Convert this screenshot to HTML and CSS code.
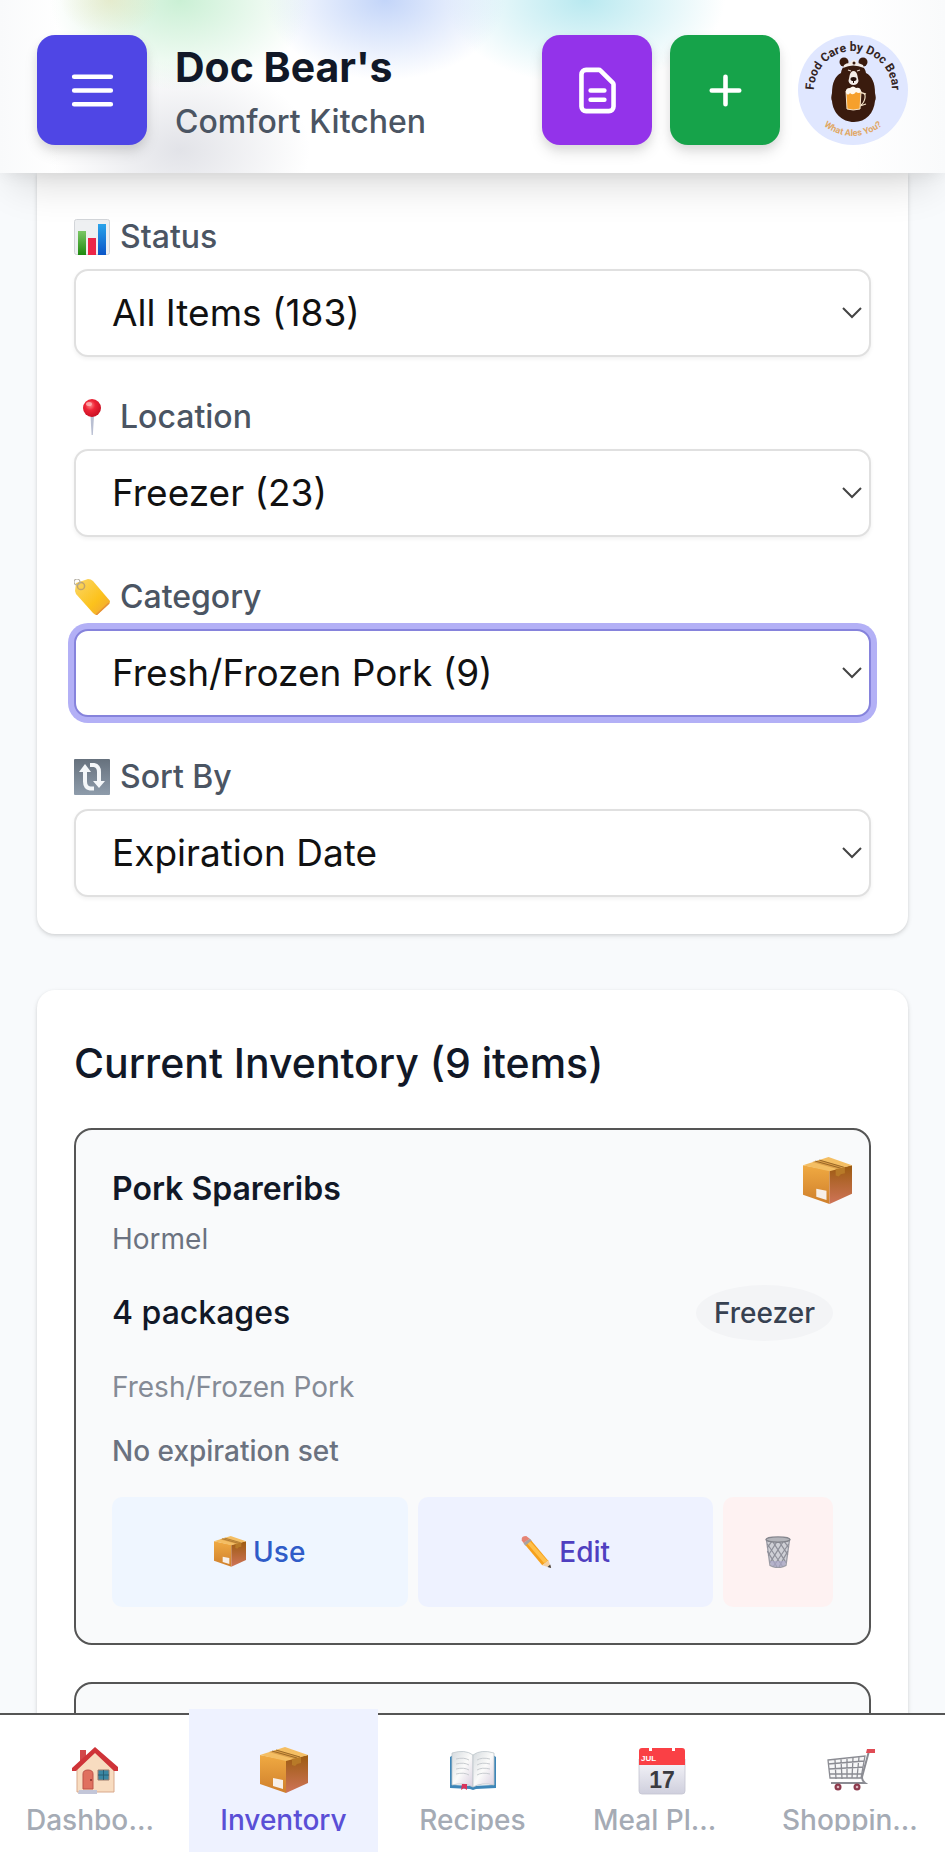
FILE: index.html
```html
<!DOCTYPE html>
<html lang="en">
<head>
<meta charset="utf-8">
<meta name="viewport" content="width=device-width, initial-scale=1">
<title>Doc Bear's Comfort Kitchen</title>
<link rel="stylesheet" href="styles.css">
</head>
<body>
<svg class="sprite" aria-hidden="true">
  <defs>
    <linearGradient id="boxFront" x1="0" y1="0" x2="0" y2="1"><stop offset="0" stop-color="#f0aa42"/><stop offset="1" stop-color="#cf7f2c"/></linearGradient>
    <linearGradient id="boxSide" x1="0" y1="0" x2="0" y2="1"><stop offset="0" stop-color="#9c5b10"/><stop offset="1" stop-color="#cf7458"/></linearGradient>
    <linearGradient id="tagFill" x1="0" y1="0" x2="1" y2="1"><stop offset="0" stop-color="#fbd768"/><stop offset=".6" stop-color="#fcc21c"/><stop offset="1" stop-color="#eda23c"/></linearGradient>
    <linearGradient id="greyFill" x1="0" y1="0" x2="0" y2="1"><stop offset="0" stop-color="#66717d"/><stop offset="1" stop-color="#8e9cab"/></linearGradient>
    <linearGradient id="barGreen" x1="0" y1="0" x2="0" y2="1"><stop offset="0" stop-color="#7cc766"/><stop offset="1" stop-color="#1f8a10"/></linearGradient>
    <linearGradient id="barBlue" x1="0" y1="0" x2="0" y2="1"><stop offset="0" stop-color="#2aa4ea"/><stop offset="1" stop-color="#0a55c8"/></linearGradient>
    <linearGradient id="pageFill" x1="0" y1="0" x2="1" y2="1"><stop offset="0" stop-color="#d5dade"/><stop offset=".5" stop-color="#fbfbfa"/><stop offset="1" stop-color="#d9cfe0"/></linearGradient>
    <linearGradient id="calFill" x1="0" y1="0" x2="0" y2="1"><stop offset="0" stop-color="#f6f6fa"/><stop offset="1" stop-color="#cfcfdd"/></linearGradient>
    <radialGradient id="pinFill" cx=".4" cy=".35" r=".7"><stop offset="0" stop-color="#ff8a8a"/><stop offset=".4" stop-color="#ee2436"/><stop offset="1" stop-color="#c40d22"/></radialGradient>
    <symbol id="package" viewBox="0 0 48 48">
      <path d="M0 8 26 13v33L0 37z" fill="url(#boxFront)"/>
      <path d="M26 13 48 8v28L26 46z" fill="url(#boxSide)"/>
      <path d="M0 8 25 0l23 8-22 6z" fill="#f4be63"/>
      <path d="m9 5 25 7 7-2L17 3z" fill="#dca04a"/>
      <path d="m12 4 25 7M16 3l24 7" stroke="#8a5a1d" stroke-width=".8" fill="none"/>
      <path d="m32 12 9-2v6l-4 1-2 2-3-1z" fill="#b87a28"/>
      <path d="m13 31 10 2v9l-10-3z" fill="#f7efe8"/>
    </symbol>
    <symbol id="chart" viewBox="0 0 36 36">
      <rect x=".5" y=".5" width="35" height="35" rx="2" fill="#eef0f2" stroke="#d2d5d9"/>
      <path d="M4 12h8v24H4z" fill="url(#barGreen)"/>
      <path d="M14 19h8v17h-8z" fill="#ec2648"/>
      <path d="M24 5h8v31h-8z" fill="url(#barBlue)"/>
    </symbol>
    <symbol id="pin" viewBox="0 0 36 36">
      <path d="M16.500 17h3.500l-1.200 19h-1.200z" fill="#b9bfd2"/>
      <circle cx="18" cy="9" r="9" fill="url(#pinFill)"/>
      <ellipse cx="15" cy="5" rx="3" ry="2" fill="#ffc1c1" opacity=".7"/>
    </symbol>
    <symbol id="tag" viewBox="0 0 36 36">
      <path d="M1 12 2 4 14 0q3 0 5 2l17 20q0 2-1 3L23 36q-2 0-4-2L2 15z" fill="url(#tagFill)"/>
      <path d="M35 24 22 36" stroke="#e69138" stroke-width="1.500"/>
      <circle cx="7" cy="7" r="3.600" fill="none" stroke="#c1a36a" stroke-width="1.500"/>
      <circle cx="3" cy="3" r="3" fill="none" stroke="#b5b0a4" stroke-width="1.200"/>
    </symbol>
    <symbol id="sort" viewBox="0 0 36 36">
      <rect width="36" height="36" rx="1" fill="url(#greyFill)"/>
      <g fill="none" stroke="#f4f7f9" stroke-width="4">
        <path d="M20 29.500h-4q-5-1-5-7V11"/>
        <path d="M16 6h4q5 1 5 7v10"/>
      </g>
      <path d="m5 13 6-8 6 8zM19 22h12l-6 7z" fill="#f4f7f9"/>
    </symbol>
    <symbol id="pencil" viewBox="0 0 36 36">
      <path d="m4 8 7-5 21 25-7 5z" fill="#f6a01c"/>
      <path d="m6.500 6.500 3-2.500L31 28l-4 2.500z" fill="#ffc04a"/>
      <path d="M2 5Q1 0 7 0l4 3-7 5z" fill="#e58475"/>
      <path d="m4 8 7-5 2 2-7 6z" fill="#a9a1a0"/>
      <path d="m32 27 3 9-10-3z" fill="#f3cfa0"/>
      <path d="m34 32 1 4-4-1z" fill="#45403f"/>
    </symbol>
    <symbol id="trash" viewBox="0 0 36 36">
      <path d="M5 4h26l-4 29q-9 5-18 0z" fill="#cfd0d6" stroke="#9c9da6" stroke-width="1.500"/>
      <path d="m6 9 17 25M6 17l11 18M12 6l15 24M19 6l10 15M25 6l5 7M30 9 13 34M29 17 19 35M24 6 9 30M17 6 7 22M11 6l-5 7" stroke="#8e8f99" stroke-width="1.300" fill="none"/>
      <path d="M9 28h18l-1 5q-8 4-16 0z" fill="#aaa6c6" opacity=".7"/>
      <ellipse cx="18" cy="4" rx="13.500" ry="3" fill="#b4b5bb" stroke="#85868e" stroke-width="1.500"/>
    </symbol>
    <symbol id="house" viewBox="0 0 48 48">
      <path d="M9 3h6v12H9z" fill="#d2484a"/>
      <path d="M6 21 24 3l19 18v24H6z" fill="#f8dcc0" stroke="#d9a98c" stroke-width="1"/>
      <path d="M1 21 24 0l23 20v4h-4L24 6 5 24H1z" fill="#cf3338"/>
      <path d="M12 42V27q0-4 5-4t5 4v15z" fill="#e0705f" stroke="#bd5349"/>
      <circle cx="20" cy="33" r="1" fill="#8b2f2a"/>
      <path d="M27 23h11v10H27z" fill="#3a87a3" stroke="#9c7a6a"/>
      <path d="M32.500 23v10M27 28h11" stroke="#275e75"/>
      <path d="M8 43h18v4H7z" fill="#c3c6d8"/>
    </symbol>
    <symbol id="book" viewBox="0 0 48 48">
      <path d="M1 10 4 8v30l20 1 20-1V8l3 2v31l-20 1-3 1-3-1-20-1z" fill="#3e86b8"/>
      <path d="M3 6q13-4 21 2v32q-9-5-21-2z" fill="url(#pageFill)" stroke="#bcc5ca" stroke-width=".8"/>
      <path d="M45 6q-13-4-21 2v32q9-5 21-2z" fill="url(#pageFill)" stroke="#bcc5ca" stroke-width=".8"/>
      <path d="M7 12q8-2 13 1M7 17q8-2 13 1M7 22q8-2 13 1M7 27q8-2 13 1M28 13q5-3 13-1M28 18q5-3 13-1M28 23q5-3 13-1M28 28q5-3 13-1" fill="none" stroke="#c8ccd0"/>
      <path d="M13 37h5v6l-3-2-3 2z" fill="#d9335c"/>
    </symbol>
    <symbol id="calendar" viewBox="0 0 48 48">
      <path d="M1 12h46v32q0 3-3 3H4q-3 0-3-3z" fill="url(#calFill)" stroke="#c4c4d0" stroke-width=".8"/>
      <path d="M1 18V4q0-3 3-3h7v3h3V1h20v3h3V1h7q3 0 3 3v14z" fill="#fa4045"/>
      <text x="3" y="14" class="cal-month">JUL</text>
      <text x="24" y="41" class="cal-day">17</text>
    </symbol>
    <symbol id="cart" viewBox="0 0 48 48">
      <path d="M1 13 38 9l-4 21q-1 3-4 3L3 31z" fill="#f6f6f7"/>
      <g fill="none" stroke="#8b8c93" stroke-width="1.300">
        <path d="m1 13 37-4-4 22H3zM8 13l1 19M14 12l1 20M20 11v20M26 11l-1 20M32 10l-2 21M1 17l36-3M2 22l34-2M3 27h32"/>
        <path d="M42 4 35 30q0 4 3 6H4" stroke-width="2"/>
      </g>
      <path d="M40 2h8v4h-9z" fill="#e04b55"/>
      <circle cx="11" cy="40" r="3.500" fill="#8c3a4c"/><circle cx="30" cy="40" r="3.500" fill="#8c3a4c"/>
      <circle cx="11" cy="40" r="1.300" fill="#dab5bd"/><circle cx="30" cy="40" r="1.300" fill="#dab5bd"/>
    </symbol>
    <symbol id="chevron" viewBox="0 0 20 12"><path d="m1 1 9 9 9-9" fill="none" stroke="#444" stroke-width="2"/></symbol>
  </defs>
</svg>

<div class="app">
  <header class="header">
    <button class="icon-button menu" type="button" aria-label="Open menu">
      <svg viewBox="0 0 24 24"><path d="M4 6h16M4 12h16M4 18h16"/></svg>
    </button>
    <div class="brand">
      <h1 class="brand-name">Doc Bear's</h1>
      <p class="brand-sub">Comfort Kitchen</p>
    </div>
    <div class="header-actions">
      <button class="icon-button notes" type="button" aria-label="Notes">
        <svg viewBox="0 0 24 24"><path d="M9 12h6m-6 4h6m2 5H7a2 2 0 01-2-2V5a2 2 0 012-2h5.586a1 1 0 01.707.293l5.414 5.414a1 1 0 01.293.707V19a2 2 0 01-2 2z"/></svg>
      </button>
      <button class="icon-button add" type="button" aria-label="Add item">
        <svg viewBox="0 0 24 24"><path d="M12 6v6m0 0v6m0-6h6m-6 0H6"/></svg>
      </button>
      <svg class="logo" viewBox="0 0 110 110" role="img" aria-label="Food Care by Doc Bear">
        <defs>
          <path id="arcTop" d="M16 62V55a39 39 0 0 1 78 0V62"/>
          <path id="arcBottom" d="M9 55a46 46 0 0 0 92 0"/>
        </defs>
        <circle cx="55" cy="55" r="55" fill="#e0e7ff"/>
        <text class="logo-top"><textPath href="#arcTop" startOffset="50%">Food Care by Doc Bear</textPath></text>
        <text class="logo-bottom"><textPath href="#arcBottom" startOffset="50%">What Ales You?</textPath></text>
        <g fill="#3a1b0e">
          <circle cx="46" cy="27" r="4.500"/><circle cx="65" cy="27" r="4.500"/>
          <path d="M55 28c-8 0-11 4-12 10-6 3-9 10-9 20-1 4-1 6 0 8 1 12 10 21 22 21s20-9 21-21c1-2 1-4 0-8 0-10-3-17-9-20-1-6-5-10-13-10z"/>
        </g>
        <path d="M45 33q10-5 21 0l-1-3q-4-2-6-2 0-3-3-3t-4 3q-4 0-6 2z" fill="#f4ede8"/>
        <circle cx="56" cy="28" r="1.500" fill="#3a1b0e"/>
        <path d="M50 35l3 1M62 35l-3 1" stroke="#e7d6cb" stroke-width="1.200"/>
        <path d="M55.500 36q3 0 4 5l1 5q-1 4-5 4t-5-4l1-5q1-5 4-5z" fill="#f4ede8"/>
        <ellipse cx="55.500" cy="44" rx="3" ry="2" fill="#24100a"/>
        <path d="M55.500 45v3" stroke="#24100a"/>
        <path d="M48 56h15l-1 18q-7 2-13 0z" fill="#f6a02c" stroke="#f5e3c8"/>
        <path d="M48 58q-1-5 4-5 3-3 6 0 5-1 5 4-2 2-5 0-3 4-6 1-2 3-4 0z" fill="#fff8ee"/>
        <path d="M63 58q5 0 4 5t-4 7M62 57l6 2M62 71l6-2" fill="none" stroke="#f5e3c8" stroke-width="1.200"/>
      </svg>
    </div>
  </header>

  <main class="content">
    <form class="card filters">
      <div class="field">
        <label class="field-label" for="status"><svg class="emoji-label"><use href="#chart"/></svg>Status</label>
        <div class="select-wrap">
          <select class="select" id="status"><option>All Items (183)</option></select>
          <svg class="chevron"><use href="#chevron"/></svg>
        </div>
      </div>
      <div class="field">
        <label class="field-label" for="location"><svg class="emoji-label"><use href="#pin"/></svg>Location</label>
        <div class="select-wrap">
          <select class="select" id="location"><option>Freezer (23)</option></select>
          <svg class="chevron"><use href="#chevron"/></svg>
        </div>
      </div>
      <div class="field">
        <label class="field-label" for="category"><svg class="emoji-label"><use href="#tag"/></svg>Category</label>
        <div class="select-wrap">
          <select class="select is-focused" id="category"><option>Fresh/Frozen Pork (9)</option></select>
          <svg class="chevron"><use href="#chevron"/></svg>
        </div>
      </div>
      <div class="field">
        <label class="field-label" for="sort-by"><svg class="emoji-label"><use href="#sort"/></svg>Sort By</label>
        <div class="select-wrap">
          <select class="select" id="sort-by"><option>Expiration Date</option></select>
          <svg class="chevron"><use href="#chevron"/></svg>
        </div>
      </div>
    </form>

    <section class="card inventory">
      <h2 class="inventory-title">Current Inventory (9 items)</h2>
      <article class="item">
        <svg class="item-emoji" aria-hidden="true"><use href="#package"/></svg>
        <div class="item-head">
          <h3 class="item-name">Pork Spareribs</h3>
          <p class="item-brand">Hormel</p>
        </div>
        <div class="item-row">
          <span class="item-qty">4 packages</span>
          <span class="badge">Freezer</span>
        </div>
        <p class="item-category">Fresh/Frozen Pork</p>
        <p class="item-expiry">No expiration set</p>
        <div class="item-actions">
          <button class="action use" type="button"><svg class="emoji-action"><use href="#package"/></svg>Use</button>
          <button class="action edit" type="button"><svg class="emoji-action"><use href="#pencil"/></svg>Edit</button>
          <button class="action delete" type="button" aria-label="Delete"><svg class="emoji-action"><use href="#trash"/></svg></button>
        </div>
      </article>
      <article class="item"></article>
    </section>
  </main>

  <nav class="tabs">
    <a class="tab" href="#dashboard"><svg class="tab-icon"><use href="#house"/></svg><span class="tab-text">Dashboard</span></a>
    <a class="tab is-active" href="#inventory"><svg class="tab-icon"><use href="#package"/></svg><span class="tab-text">Inventory</span></a>
    <a class="tab" href="#recipes"><svg class="tab-icon"><use href="#book"/></svg><span class="tab-text">Recipes</span></a>
    <a class="tab" href="#meals"><svg class="tab-icon"><use href="#calendar"/></svg><span class="tab-text">Meal Planning</span></a>
    <a class="tab" href="#shopping"><svg class="tab-icon"><use href="#cart"/></svg><span class="tab-text">Shopping List</span></a>
  </nav>
</div>
</body>
</html>
```

FILE: styles.css
```css
* { box-sizing: border-box; }

body {
  margin: 0;
  font-family: Inter, "Liberation Sans", sans-serif;
  font-optical-sizing: none;
  background: #f8fafc;
  color: #111827;
}

h1, h2, h3, p { margin: 0; }
button, select { font: inherit; }
.sprite { position: absolute; width: 0; height: 0; }

.app { display: flex; flex-direction: column; height: 100vh; }

/* Header */
.header {
  position: relative;
  z-index: 2;
  display: flex;
  gap: 28px;
  padding: 35px 37px 28px;
  background:
    radial-gradient(ellipse 50px 36px at 110px 0, #e3dfb080, transparent),
    radial-gradient(ellipse 130px 90px at 180px 0, #bdeccacc, transparent),
    radial-gradient(ellipse 120px 80px at 385px 0, #c3d5f9, transparent),
    radial-gradient(ellipse 140px 85px at 585px 0, #b9e9f0, transparent),
    radial-gradient(ellipse 130px 90px at 180px 150px, #e2e3e8, transparent),
    linear-gradient(90deg, #f9fafb, #fff 60px, #fff calc(100% - 90px), #f9fafb);
  box-shadow: 0 23px 40px -14px rgba(0, 0, 0, .16), 0 4px 16px -4px rgba(0, 0, 0, .08);
}

.icon-button {
  display: grid;
  place-items: center;
  width: 110px;
  height: 110px;
  padding: 0;
  border: 0;
  border-radius: 18px;
  box-shadow: 0 8px 14px rgba(0, 0, 0, .1), 0 4px 8px rgba(0, 0, 0, .06);
}
.icon-button svg {
  width: 55px;
  height: 55px;
  fill: none;
  stroke: #fff;
  stroke-width: 2;
  stroke-linecap: round;
  stroke-linejoin: round;
}
.menu { background: #4f46e5; }
.notes { background: #9333ea; }
.add { background: #16a34a; }

.brand { flex: 1; padding-top: 7px; }
.brand-name { margin-bottom: 7px; font-size: 41px; line-height: 50px; font-weight: 700; }
.brand-sub { font-size: 32px; line-height: 46px; font-weight: 500; color: #4b5563; }
.header-actions { display: flex; gap: 18px; }

.logo { width: 110px; height: 110px; }
.logo-top { font: 700 12px Roboto, sans-serif; fill: #33241f; text-anchor: middle; }
.logo-bottom { font: 700 9px Roboto, sans-serif; fill: #e0a765; text-anchor: middle; }

/* Content */
.content {
  flex: 1;
  min-height: 0;
  overflow-y: auto;
  scrollbar-width: none;
  padding: 0 37px;
}
.card {
  padding: 41px 37px 37px;
  border-radius: 18px;
  background: #fff;
  box-shadow: 0 2px 5px rgba(0, 0, 0, .12), 0 1px 3px rgba(0, 0, 0, .06);
}

.filters { display: grid; gap: 37px; border-radius: 0 0 18px 18px; }
.field { display: grid; gap: 9px; }
.field-label {
  display: flex;
  align-items: center;
  gap: 10px;
  font-size: 32px;
  line-height: 46px;
  font-weight: 500;
  color: #4b5563;
}
.emoji-label { width: 36px; height: 36px; }
.select-wrap { position: relative; }
.select {
  display: block;
  width: 100%;
  height: 88px;
  padding: 0 60px 2px 36px;
  border: 2px solid #e0e0e0;
  border-radius: 14px;
  appearance: none;
  background: #fff;
  color: #111;
  font-size: 37px;
  box-shadow: 0 2px 4px rgba(0, 0, 0, .06);
}
.select.is-focused { border-color: #8683dc; box-shadow: 0 0 0 6px #b3b0f6; }
.chevron {
  position: absolute;
  top: 38px;
  right: 9px;
  width: 20px;
  height: 12px;
  pointer-events: none;
}

.inventory { display: grid; gap: 37px; margin-top: 56px; }
.inventory-title { margin-bottom: -4px; font-size: 41px; line-height: 64px; font-weight: 500; }

.item {
  position: relative;
  display: grid;
  gap: 28px;
  min-height: 120px;
  padding: 36px;
  border: 2px solid #555;
  border-radius: 18px;
  background: #f9fafb;
}
.item-emoji { position: absolute; top: 27px; right: 17px; width: 49px; height: 49px; }
.item-head { display: grid; gap: 9px; }
.item-name { font-size: 32px; line-height: 46px; font-weight: 600; }
.item-brand { font-size: 28px; line-height: 36px; color: #6b7280; }
.item-row { display: flex; align-items: center; justify-content: space-between; }
.item-qty { font-size: 32px; line-height: 46px; font-weight: 500; }
.badge {
  padding: 10px 18px;
  border-radius: 50%;
  background: #f3f4f6;
  color: #374151;
  font-size: 28px;
  line-height: 36px;
  font-weight: 500;
}
.item-category { font-size: 28px; line-height: 36px; color: #858b96; }
.item-expiry { font-size: 28px; line-height: 36px; font-weight: 500; color: #6b7280; }

.item-actions { display: flex; gap: 10px; }
.action {
  display: flex;
  flex: 1;
  align-items: center;
  justify-content: center;
  gap: 7px;
  height: 110px;
  padding: 0;
  border: 0;
  border-radius: 10px;
  font-size: 28px;
  font-weight: 500;
}
.emoji-action { width: 32px; height: 32px; }
.use { background: #eff6ff; color: #2f5cc8; }
.edit { background: #eef2ff; color: #4f3fc0; }
.delete { flex: 0 0 110px; background: #fef2f2; }

/* Bottom navigation */
.tabs {
  position: relative;
  z-index: 2;
  display: grid;
  grid-template-columns: repeat(5, minmax(0, 1fr));
  padding-bottom: 4px;
  border-top: 2px solid #555;
  background: #fff;
}
.tab {
  display: flex;
  flex-direction: column;
  align-items: center;
  gap: 14px;
  height: 143px;
  margin-top: -6px;
  padding: 38px 26px 0;
  color: #a5abb5;
  font-size: 28px;
  font-weight: 500;
  text-decoration: none;
}
.tab.is-active { background: #eef2ff; color: #5a4fd6; }
.tab-icon { width: 48px; height: 48px; }
.tab-text {
  max-width: 100%;
  overflow: hidden;
  line-height: 22px;
  text-overflow: ellipsis;
  white-space: nowrap;
}

.cal-month { font: 700 8px "Liberation Sans", sans-serif; fill: #fff; }
.cal-day { font: 700 23px "Liberation Sans", sans-serif; fill: #3a3a40; text-anchor: middle; }
```
